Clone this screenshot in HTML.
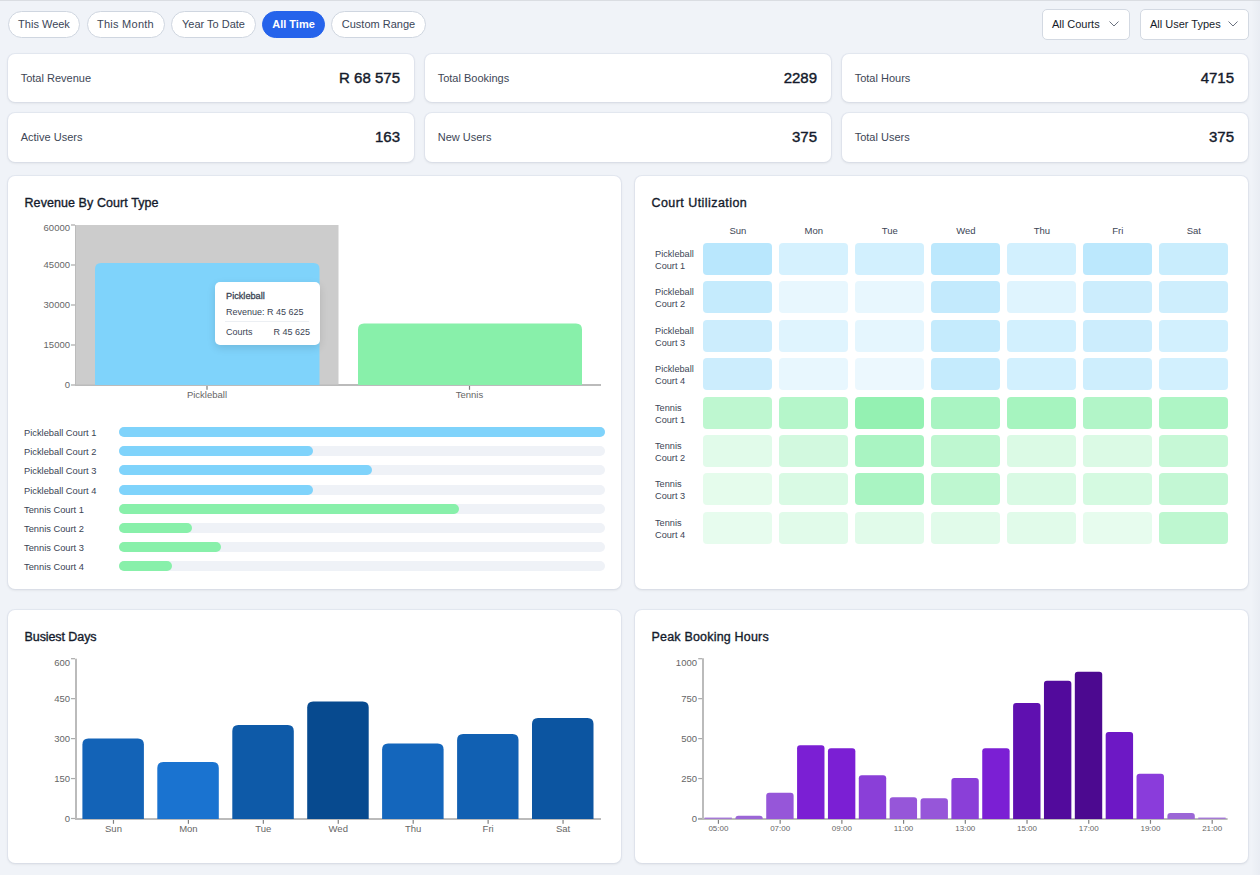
<!DOCTYPE html>
<html><head><meta charset="utf-8">
<style>
*{box-sizing:border-box;margin:0;padding:0}
html,body{width:1260px;height:875px;overflow:hidden;background:#f0f3f8;font-family:"Liberation Sans",sans-serif;position:relative}
.topline{position:absolute;left:0;top:0;width:1260px;height:1px;background:#dadde2}
.pill{position:absolute;top:11px;height:27px;border:1px solid #cfd6e0;border-radius:14px;background:#fff;color:#3b4658;font-size:11px;line-height:25px;text-align:center;white-space:nowrap}
.pill.on{background:#2563eb;border-color:#2563eb;color:#fff;font-weight:bold}
.dd{position:absolute;top:9px;height:31px;border:1px solid #d3d9e2;border-radius:5px;background:#fff;color:#161c2a;font-size:11px;line-height:28px;padding-left:9px;white-space:nowrap}
.dd svg{position:absolute;top:11px}
.card{position:absolute;background:#fff;border-radius:7px;box-shadow:0 0 0 1px rgba(212,220,232,0.45),0 1px 3px rgba(0,0,0,0.11)}
.lab{position:absolute;left:12.7px;font-size:11px;color:#3d4656;white-space:nowrap}
.val{position:absolute;right:14px;font-size:15px;font-weight:normal;-webkit-text-stroke:0.4px #131a2b;color:#131a2b;white-space:nowrap}
.title{position:absolute;font-size:12.5px;font-weight:normal;-webkit-text-stroke:0.35px #141b2c;color:#141b2c;white-space:nowrap}
svg text{font-family:"Liberation Sans",sans-serif}
</style></head>
<body>
<div class="topline"></div>
<div class="pill" style="left:8px;width:72px">This Week</div>
<div class="pill" style="left:86.5px;width:78px;letter-spacing:0.25px">This Month</div>
<div class="pill" style="left:171px;width:85px">Year To Date</div>
<div class="pill on" style="left:262px;width:63px">All Time</div>
<div class="pill" style="left:331px;width:95px">Custom Range</div>

<div class="dd" style="left:1042px;width:88px">All Courts<svg style="left:66px" width="10" height="6" viewBox="0 0 10 6"><path d="M0.5 0.5 L5 5 L9.5 0.5" fill="none" stroke="#6b7280" stroke-width="1"/></svg></div>
<div class="dd" style="left:1140px;width:109px">All User Types<svg style="left:87px" width="10" height="6" viewBox="0 0 10 6"><path d="M0.5 0.5 L5 5 L9.5 0.5" fill="none" stroke="#6b7280" stroke-width="1"/></svg></div>

<div class="card" style="left:8px;top:54px;width:406px;height:48px"><div class="lab" style="top:18px">Total Revenue</div><div class="val" style="top:14.5px">R 68 575</div></div>
<div class="card" style="left:425px;top:54px;width:406px;height:48px"><div class="lab" style="top:18px">Total Bookings</div><div class="val" style="top:14.5px">2289</div></div>
<div class="card" style="left:842px;top:54px;width:406px;height:48px"><div class="lab" style="top:18px">Total Hours</div><div class="val" style="top:14.5px">4715</div></div>
<div class="card" style="left:8px;top:113px;width:406px;height:49px"><div class="lab" style="top:18px">Active Users</div><div class="val" style="top:14.5px">163</div></div>
<div class="card" style="left:425px;top:113px;width:406px;height:49px"><div class="lab" style="top:18px">New Users</div><div class="val" style="top:14.5px">375</div></div>
<div class="card" style="left:842px;top:113px;width:406px;height:49px"><div class="lab" style="top:18px">Total Users</div><div class="val" style="top:14.5px">375</div></div>

<!-- chart cards -->
<div class="card" style="left:8px;top:176px;width:613px;height:413px"></div>
<div class="card" style="left:635px;top:176px;width:613px;height:413px"></div>
<div class="card" style="left:8px;top:610px;width:613px;height:253px"></div>
<div class="card" style="left:635px;top:610px;width:613px;height:253px"></div>

<div class="title" style="left:24.5px;top:195.9px;letter-spacing:0.075px">Revenue By Court Type</div>
<div class="title" style="left:651.5px;top:195.9px;letter-spacing:0.44px">Court Utilization</div>
<div class="title" style="left:24.5px;top:630.2px;letter-spacing:-0.08px">Busiest Days</div>
<div class="title" style="left:651.5px;top:630.2px;letter-spacing:0.19px">Peak Booking Hours</div>

<svg style="position:absolute;left:0;top:0" width="1260" height="875" viewBox="0 0 1260 875">
<rect x="75" y="225" width="2" height="161" fill="#bbb"/>
<rect x="75" y="384" width="526" height="2" fill="#bbb"/>
<rect x="76" y="225" width="262.5" height="159.5" fill="#cccccc"/>
<path d="M95,385 L95,269 Q95,263 101,263 L313.5,263 Q319.5,263 319.5,269 L319.5,385 Z" fill="#7fd3fb"/>
<path d="M358,385 L358,329.5 Q358,323.5 364,323.5 L576,323.5 Q582,323.5 582,329.5 L582,385 Z" fill="#88f0aa"/>
<rect x="71" y="224.4" width="4" height="1.2" fill="#aaa"/>
<text x="70" y="231.3" font-size="9.5" fill="#666" text-anchor="end">60000</text>
<rect x="71" y="264.4" width="4" height="1.2" fill="#aaa"/>
<text x="70" y="267.8" font-size="9.5" fill="#666" text-anchor="end">45000</text>
<rect x="71" y="304.4" width="4" height="1.2" fill="#aaa"/>
<text x="70" y="307.8" font-size="9.5" fill="#666" text-anchor="end">30000</text>
<rect x="71" y="344.4" width="4" height="1.2" fill="#aaa"/>
<text x="70" y="347.8" font-size="9.5" fill="#666" text-anchor="end">15000</text>
<rect x="71" y="384.4" width="4" height="1.2" fill="#aaa"/>
<text x="70" y="387.8" font-size="9.5" fill="#666" text-anchor="end">0</text>
<rect x="206.4" y="386" width="1.2" height="3.8" fill="#808080"/>
<text x="207" y="398" font-size="9.5" fill="#666" text-anchor="middle">Pickleball</text>
<rect x="468.9" y="386" width="1.2" height="3.8" fill="#808080"/>
<text x="469.5" y="398" font-size="9.5" fill="#666" text-anchor="middle">Tennis</text>
<rect x="75" y="658.7" width="2" height="161" fill="#bbb"/>
<rect x="75" y="818" width="526" height="2" fill="#bbb"/>
<rect x="71" y="658.10" width="4" height="1.2" fill="#aaa"/>
<text x="70" y="665.90" font-size="9.5" fill="#666" text-anchor="end">600</text>
<rect x="71" y="698.05" width="4" height="1.2" fill="#aaa"/>
<text x="70" y="701.95" font-size="9.5" fill="#666" text-anchor="end">450</text>
<rect x="71" y="738.00" width="4" height="1.2" fill="#aaa"/>
<text x="70" y="741.90" font-size="9.5" fill="#666" text-anchor="end">300</text>
<rect x="71" y="777.95" width="4" height="1.2" fill="#aaa"/>
<text x="70" y="781.85" font-size="9.5" fill="#666" text-anchor="end">150</text>
<rect x="71" y="817.90" width="4" height="1.2" fill="#aaa"/>
<text x="70" y="821.80" font-size="9.5" fill="#666" text-anchor="end">0</text>
<path d="M82.4,819 L82.4,744.5 Q82.4,738.5 88.4,738.5 L137.9,738.5 Q143.9,738.5 143.9,744.5 L143.9,819 Z" fill="#1363b7"/>
<rect x="112.87" y="820" width="1.2" height="3.8" fill="#808080"/>
<text x="113.47" y="832.2" font-size="9.5" fill="#666" text-anchor="middle">Sun</text>
<path d="M157.3,819 L157.3,768.1 Q157.3,762.1 163.3,762.1 L212.8,762.1 Q218.8,762.1 218.8,768.1 L218.8,819 Z" fill="#1a73d0"/>
<rect x="187.80" y="820" width="1.2" height="3.8" fill="#808080"/>
<text x="188.40" y="832.2" font-size="9.5" fill="#666" text-anchor="middle">Mon</text>
<path d="M232.3,819 L232.3,731.0 Q232.3,725.0 238.3,725.0 L287.8,725.0 Q293.8,725.0 293.8,731.0 L293.8,819 Z" fill="#0e5aa8"/>
<rect x="262.73" y="820" width="1.2" height="3.8" fill="#808080"/>
<text x="263.33" y="832.2" font-size="9.5" fill="#666" text-anchor="middle">Tue</text>
<path d="M307.2,819 L307.2,707.6 Q307.2,701.6 313.2,701.6 L362.7,701.6 Q368.7,701.6 368.7,707.6 L368.7,819 Z" fill="#074a8f"/>
<rect x="337.66" y="820" width="1.2" height="3.8" fill="#808080"/>
<text x="338.26" y="832.2" font-size="9.5" fill="#666" text-anchor="middle">Wed</text>
<path d="M382.1,819 L382.1,749.5 Q382.1,743.5 388.1,743.5 L437.6,743.5 Q443.6,743.5 443.6,749.5 L443.6,819 Z" fill="#1466bc"/>
<rect x="412.59" y="820" width="1.2" height="3.8" fill="#808080"/>
<text x="413.19" y="832.2" font-size="9.5" fill="#666" text-anchor="middle">Thu</text>
<path d="M457.1,819 L457.1,739.9 Q457.1,733.9 463.1,733.9 L512.5,733.9 Q518.5,733.9 518.5,739.9 L518.5,819 Z" fill="#1160b2"/>
<rect x="487.52" y="820" width="1.2" height="3.8" fill="#808080"/>
<text x="488.12" y="832.2" font-size="9.5" fill="#666" text-anchor="middle">Fri</text>
<path d="M532.0,819 L532.0,724.1 Q532.0,718.1 538.0,718.1 L587.5,718.1 Q593.5,718.1 593.5,724.1 L593.5,819 Z" fill="#0c55a1"/>
<rect x="562.45" y="820" width="1.2" height="3.8" fill="#808080"/>
<text x="563.05" y="832.2" font-size="9.5" fill="#666" text-anchor="middle">Sat</text>
<rect x="702" y="658.3" width="2" height="161.4" fill="#bbb"/>
<rect x="698" y="818" width="529.6" height="2" fill="#bbb"/>
<rect x="698.2" y="658.10" width="4" height="1.2" fill="#aaa"/>
<text x="697" y="665.90" font-size="9.5" fill="#666" text-anchor="end">1000</text>
<rect x="698.2" y="698.05" width="4" height="1.2" fill="#aaa"/>
<text x="697" y="701.95" font-size="9.5" fill="#666" text-anchor="end">750</text>
<rect x="698.2" y="738.00" width="4" height="1.2" fill="#aaa"/>
<text x="697" y="741.90" font-size="9.5" fill="#666" text-anchor="end">500</text>
<rect x="698.2" y="777.95" width="4" height="1.2" fill="#aaa"/>
<text x="697" y="781.85" font-size="9.5" fill="#666" text-anchor="end">250</text>
<rect x="698.2" y="817.90" width="4" height="1.2" fill="#aaa"/>
<text x="697" y="821.80" font-size="9.5" fill="#666" text-anchor="end">0</text>
<rect x="704.50" y="817.6" width="27.4" height="1.2" fill="#9e6ad8"/>
<rect x="717.83" y="820" width="1.2" height="3.8" fill="#808080"/>
<text x="718.43" y="831" font-size="8" fill="#666" text-anchor="middle">05:00</text>
<path d="M735.36,819 L735.36,818.82 Q735.36,815.82 738.36,815.82 L759.76,815.82 Q762.76,815.82 762.76,818.82 L762.76,819 Z" fill="#9b66d6"/>
<path d="M766.22,819 L766.22,795.81 Q766.22,792.81 769.22,792.81 L790.62,792.81 Q793.62,792.81 793.62,795.81 L793.62,819 Z" fill="#9656d9"/>
<rect x="779.55" y="820" width="1.2" height="3.8" fill="#808080"/>
<text x="780.15" y="831" font-size="8" fill="#666" text-anchor="middle">07:00</text>
<path d="M797.08,819 L797.08,748.35 Q797.08,745.35 800.08,745.35 L821.48,745.35 Q824.48,745.35 824.48,748.35 L824.48,819 Z" fill="#7b1fd4"/>
<path d="M827.94,819 L827.94,751.23 Q827.94,748.23 830.94,748.23 L852.34,748.23 Q855.34,748.23 855.34,751.23 L855.34,819 Z" fill="#7b1fd4"/>
<rect x="841.27" y="820" width="1.2" height="3.8" fill="#808080"/>
<text x="841.87" y="831" font-size="8" fill="#666" text-anchor="middle">09:00</text>
<path d="M858.8,819 L858.8,778.23 Q858.8,775.23 861.8,775.23 L883.2,775.23 Q886.2,775.23 886.2,778.23 L886.2,819 Z" fill="#8a3fd8"/>
<path d="M889.66,819 L889.66,800.29 Q889.66,797.29 892.66,797.29 L914.06,797.29 Q917.06,797.29 917.06,800.29 L917.06,819 Z" fill="#9656d9"/>
<rect x="902.99" y="820" width="1.2" height="3.8" fill="#808080"/>
<text x="903.59" y="831" font-size="8" fill="#666" text-anchor="middle">11:00</text>
<path d="M920.52,819 L920.52,801.25 Q920.52,798.25 923.52,798.25 L944.92,798.25 Q947.92,798.25 947.92,801.25 L947.92,819 Z" fill="#9656d9"/>
<path d="M951.38,819 L951.38,781.11 Q951.38,778.11 954.38,778.11 L975.78,778.11 Q978.78,778.11 978.78,781.11 L978.78,819 Z" fill="#8a3fd8"/>
<rect x="964.71" y="820" width="1.2" height="3.8" fill="#808080"/>
<text x="965.31" y="831" font-size="8" fill="#666" text-anchor="middle">13:00</text>
<path d="M982.24,819 L982.24,751.23 Q982.24,748.23 985.24,748.23 L1006.64,748.23 Q1009.64,748.23 1009.64,751.23 L1009.64,819 Z" fill="#7b1fd4"/>
<path d="M1013.1,819 L1013.1,706.0 Q1013.1,703.0 1016.1,703.0 L1037.5,703.0 Q1040.5,703.0 1040.5,706.0 L1040.5,819 Z" fill="#5f10b0"/>
<rect x="1026.43" y="820" width="1.2" height="3.8" fill="#808080"/>
<text x="1027.03" y="831" font-size="8" fill="#666" text-anchor="middle">15:00</text>
<path d="M1043.96,819 L1043.96,683.63 Q1043.96,680.63 1046.96,680.63 L1068.36,680.63 Q1071.36,680.63 1071.36,683.63 L1071.36,819 Z" fill="#520a9c"/>
<path d="M1074.82,819 L1074.82,674.84 Q1074.82,671.84 1077.82,671.84 L1099.22,671.84 Q1102.22,671.84 1102.22,674.84 L1102.22,819 Z" fill="#4c0990"/>
<rect x="1088.15" y="820" width="1.2" height="3.8" fill="#808080"/>
<text x="1088.75" y="831" font-size="8" fill="#666" text-anchor="middle">17:00</text>
<path d="M1105.68,819 L1105.68,735.09 Q1105.68,732.09 1108.68,732.09 L1130.08,732.09 Q1133.08,732.09 1133.08,735.09 L1133.08,819 Z" fill="#6d18c5"/>
<path d="M1136.54,819 L1136.54,776.64 Q1136.54,773.64 1139.54,773.64 L1160.94,773.64 Q1163.94,773.64 1163.94,776.64 L1163.94,819 Z" fill="#8a3cdb"/>
<rect x="1149.87" y="820" width="1.2" height="3.8" fill="#808080"/>
<text x="1150.47" y="831" font-size="8" fill="#666" text-anchor="middle">19:00</text>
<path d="M1167.4,819 L1167.4,815.95 Q1167.4,812.95 1170.4,812.95 L1191.8,812.95 Q1194.8,812.95 1194.8,815.95 L1194.8,819 Z" fill="#9b66d6"/>
<rect x="1198.26" y="817.6" width="27.4" height="1.2" fill="#9e6ad8"/>
<rect x="1211.59" y="820" width="1.2" height="3.8" fill="#808080"/>
<text x="1212.19" y="831" font-size="8" fill="#666" text-anchor="middle">21:00</text>
</svg>
<div style="position:absolute;left:215px;top:282.2px;width:105px;height:63px;background:#fff;border-radius:5px;box-shadow:0 3px 8px rgba(0,0,0,0.12)">
<div style="position:absolute;left:11px;top:9px;font-size:9.2px;font-weight:normal;-webkit-text-stroke:0.3px #3a4353;color:#3a4353;white-space:nowrap">Pickleball</div>
<div style="position:absolute;left:11px;top:25.2px;font-size:9px;color:#3a4353;white-space:nowrap">Revenue: R 45 625</div>
<div style="position:absolute;left:10px;top:39px;width:84px;height:1px;background:#eceff3"></div>
<div style="position:absolute;left:11px;top:45px;font-size:9px;color:#3a4353;white-space:nowrap">Courts</div>
<div style="position:absolute;right:10px;top:45px;font-size:9px;color:#3a4353;white-space:nowrap">R 45 625</div>
</div>
<div style="position:absolute;left:24px;top:427.00px;font-size:9.3px;line-height:12px;color:#3a4353;white-space:nowrap">Pickleball Court 1</div>
<div style="position:absolute;left:119px;top:427.00px;width:486px;height:10px;border-radius:5px;background:#eff2f7"></div>
<div style="position:absolute;left:119px;top:427.00px;width:486.0px;height:10px;border-radius:5px;background:#7fd3fb"></div>
<div style="position:absolute;left:24px;top:446.18px;font-size:9.3px;line-height:12px;color:#3a4353;white-space:nowrap">Pickleball Court 2</div>
<div style="position:absolute;left:119px;top:446.18px;width:486px;height:10px;border-radius:5px;background:#eff2f7"></div>
<div style="position:absolute;left:119px;top:446.18px;width:193.9px;height:10px;border-radius:5px;background:#7fd3fb"></div>
<div style="position:absolute;left:24px;top:465.36px;font-size:9.3px;line-height:12px;color:#3a4353;white-space:nowrap">Pickleball Court 3</div>
<div style="position:absolute;left:119px;top:465.36px;width:486px;height:10px;border-radius:5px;background:#eff2f7"></div>
<div style="position:absolute;left:119px;top:465.36px;width:252.7px;height:10px;border-radius:5px;background:#7fd3fb"></div>
<div style="position:absolute;left:24px;top:484.54px;font-size:9.3px;line-height:12px;color:#3a4353;white-space:nowrap">Pickleball Court 4</div>
<div style="position:absolute;left:119px;top:484.54px;width:486px;height:10px;border-radius:5px;background:#eff2f7"></div>
<div style="position:absolute;left:119px;top:484.54px;width:193.9px;height:10px;border-radius:5px;background:#7fd3fb"></div>
<div style="position:absolute;left:24px;top:503.72px;font-size:9.3px;line-height:12px;color:#3a4353;white-space:nowrap">Tennis Court 1</div>
<div style="position:absolute;left:119px;top:503.72px;width:486px;height:10px;border-radius:5px;background:#eff2f7"></div>
<div style="position:absolute;left:119px;top:503.72px;width:339.7px;height:10px;border-radius:5px;background:#88f0aa"></div>
<div style="position:absolute;left:24px;top:522.90px;font-size:9.3px;line-height:12px;color:#3a4353;white-space:nowrap">Tennis Court 2</div>
<div style="position:absolute;left:119px;top:522.90px;width:486px;height:10px;border-radius:5px;background:#eff2f7"></div>
<div style="position:absolute;left:119px;top:522.90px;width:72.9px;height:10px;border-radius:5px;background:#88f0aa"></div>
<div style="position:absolute;left:24px;top:542.08px;font-size:9.3px;line-height:12px;color:#3a4353;white-space:nowrap">Tennis Court 3</div>
<div style="position:absolute;left:119px;top:542.08px;width:486px;height:10px;border-radius:5px;background:#eff2f7"></div>
<div style="position:absolute;left:119px;top:542.08px;width:102.1px;height:10px;border-radius:5px;background:#88f0aa"></div>
<div style="position:absolute;left:24px;top:561.26px;font-size:9.3px;line-height:12px;color:#3a4353;white-space:nowrap">Tennis Court 4</div>
<div style="position:absolute;left:119px;top:561.26px;width:486px;height:10px;border-radius:5px;background:#eff2f7"></div>
<div style="position:absolute;left:119px;top:561.26px;width:52.5px;height:10px;border-radius:5px;background:#88f0aa"></div>
<div style="position:absolute;left:707.85px;width:60px;top:224.5px;text-align:center;font-size:9.5px;line-height:12px;color:#3d4656">Sun</div>
<div style="position:absolute;left:783.85px;width:60px;top:224.5px;text-align:center;font-size:9.5px;line-height:12px;color:#3d4656">Mon</div>
<div style="position:absolute;left:859.85px;width:60px;top:224.5px;text-align:center;font-size:9.5px;line-height:12px;color:#3d4656">Tue</div>
<div style="position:absolute;left:935.85px;width:60px;top:224.5px;text-align:center;font-size:9.5px;line-height:12px;color:#3d4656">Wed</div>
<div style="position:absolute;left:1011.85px;width:60px;top:224.5px;text-align:center;font-size:9.5px;line-height:12px;color:#3d4656">Thu</div>
<div style="position:absolute;left:1087.85px;width:60px;top:224.5px;text-align:center;font-size:9.5px;line-height:12px;color:#3d4656">Fri</div>
<div style="position:absolute;left:1163.85px;width:60px;top:224.5px;text-align:center;font-size:9.5px;line-height:12px;color:#3d4656">Sat</div>
<div style="position:absolute;left:655px;top:249.10px;font-size:9.2px;line-height:11.7px;color:#3d4656;white-space:nowrap">Pickleball<br>Court 1</div>
<div style="position:absolute;left:703px;top:243.00px;width:69.3px;height:31.8px;border-radius:4px;background:rgba(127,211,251,0.55)"></div>
<div style="position:absolute;left:779px;top:243.00px;width:69.3px;height:31.8px;border-radius:4px;background:rgba(127,211,251,0.33)"></div>
<div style="position:absolute;left:855px;top:243.00px;width:69.3px;height:31.8px;border-radius:4px;background:rgba(127,211,251,0.35)"></div>
<div style="position:absolute;left:931px;top:243.00px;width:69.3px;height:31.8px;border-radius:4px;background:rgba(127,211,251,0.52)"></div>
<div style="position:absolute;left:1007px;top:243.00px;width:69.3px;height:31.8px;border-radius:4px;background:rgba(127,211,251,0.35)"></div>
<div style="position:absolute;left:1083px;top:243.00px;width:69.3px;height:31.8px;border-radius:4px;background:rgba(127,211,251,0.52)"></div>
<div style="position:absolute;left:1159px;top:243.00px;width:69.3px;height:31.8px;border-radius:4px;background:rgba(127,211,251,0.42)"></div>
<div style="position:absolute;left:655px;top:287.10px;font-size:9.2px;line-height:11.7px;color:#3d4656;white-space:nowrap">Pickleball<br>Court 2</div>
<div style="position:absolute;left:703px;top:281.00px;width:69.3px;height:31.8px;border-radius:4px;background:rgba(127,211,251,0.45)"></div>
<div style="position:absolute;left:779px;top:281.00px;width:69.3px;height:31.8px;border-radius:4px;background:rgba(127,211,251,0.18)"></div>
<div style="position:absolute;left:855px;top:281.00px;width:69.3px;height:31.8px;border-radius:4px;background:rgba(127,211,251,0.18)"></div>
<div style="position:absolute;left:931px;top:281.00px;width:69.3px;height:31.8px;border-radius:4px;background:rgba(127,211,251,0.47)"></div>
<div style="position:absolute;left:1007px;top:281.00px;width:69.3px;height:31.8px;border-radius:4px;background:rgba(127,211,251,0.25)"></div>
<div style="position:absolute;left:1083px;top:281.00px;width:69.3px;height:31.8px;border-radius:4px;background:rgba(127,211,251,0.4)"></div>
<div style="position:absolute;left:1159px;top:281.00px;width:69.3px;height:31.8px;border-radius:4px;background:rgba(127,211,251,0.38)"></div>
<div style="position:absolute;left:655px;top:326.10px;font-size:9.2px;line-height:11.7px;color:#3d4656;white-space:nowrap">Pickleball<br>Court 3</div>
<div style="position:absolute;left:703px;top:320.00px;width:69.3px;height:31.8px;border-radius:4px;background:rgba(127,211,251,0.4)"></div>
<div style="position:absolute;left:779px;top:320.00px;width:69.3px;height:31.8px;border-radius:4px;background:rgba(127,211,251,0.25)"></div>
<div style="position:absolute;left:855px;top:320.00px;width:69.3px;height:31.8px;border-radius:4px;background:rgba(127,211,251,0.2)"></div>
<div style="position:absolute;left:931px;top:320.00px;width:69.3px;height:31.8px;border-radius:4px;background:rgba(127,211,251,0.45)"></div>
<div style="position:absolute;left:1007px;top:320.00px;width:69.3px;height:31.8px;border-radius:4px;background:rgba(127,211,251,0.35)"></div>
<div style="position:absolute;left:1083px;top:320.00px;width:69.3px;height:31.8px;border-radius:4px;background:rgba(127,211,251,0.4)"></div>
<div style="position:absolute;left:1159px;top:320.00px;width:69.3px;height:31.8px;border-radius:4px;background:rgba(127,211,251,0.35)"></div>
<div style="position:absolute;left:655px;top:364.10px;font-size:9.2px;line-height:11.7px;color:#3d4656;white-space:nowrap">Pickleball<br>Court 4</div>
<div style="position:absolute;left:703px;top:358.00px;width:69.3px;height:31.8px;border-radius:4px;background:rgba(127,211,251,0.4)"></div>
<div style="position:absolute;left:779px;top:358.00px;width:69.3px;height:31.8px;border-radius:4px;background:rgba(127,211,251,0.18)"></div>
<div style="position:absolute;left:855px;top:358.00px;width:69.3px;height:31.8px;border-radius:4px;background:rgba(127,211,251,0.15)"></div>
<div style="position:absolute;left:931px;top:358.00px;width:69.3px;height:31.8px;border-radius:4px;background:rgba(127,211,251,0.45)"></div>
<div style="position:absolute;left:1007px;top:358.00px;width:69.3px;height:31.8px;border-radius:4px;background:rgba(127,211,251,0.35)"></div>
<div style="position:absolute;left:1083px;top:358.00px;width:69.3px;height:31.8px;border-radius:4px;background:rgba(127,211,251,0.38)"></div>
<div style="position:absolute;left:1159px;top:358.00px;width:69.3px;height:31.8px;border-radius:4px;background:rgba(127,211,251,0.35)"></div>
<div style="position:absolute;left:655px;top:403.10px;font-size:9.2px;line-height:11.7px;color:#3d4656;white-space:nowrap">Tennis<br>Court 1</div>
<div style="position:absolute;left:703px;top:397.00px;width:69.3px;height:31.8px;border-radius:4px;background:rgba(136,240,170,0.55)"></div>
<div style="position:absolute;left:779px;top:397.00px;width:69.3px;height:31.8px;border-radius:4px;background:rgba(136,240,170,0.62)"></div>
<div style="position:absolute;left:855px;top:397.00px;width:69.3px;height:31.8px;border-radius:4px;background:rgba(136,240,170,0.9)"></div>
<div style="position:absolute;left:931px;top:397.00px;width:69.3px;height:31.8px;border-radius:4px;background:rgba(136,240,170,0.72)"></div>
<div style="position:absolute;left:1007px;top:397.00px;width:69.3px;height:31.8px;border-radius:4px;background:rgba(136,240,170,0.75)"></div>
<div style="position:absolute;left:1083px;top:397.00px;width:69.3px;height:31.8px;border-radius:4px;background:rgba(136,240,170,0.65)"></div>
<div style="position:absolute;left:1159px;top:397.00px;width:69.3px;height:31.8px;border-radius:4px;background:rgba(136,240,170,0.68)"></div>
<div style="position:absolute;left:655px;top:441.10px;font-size:9.2px;line-height:11.7px;color:#3d4656;white-space:nowrap">Tennis<br>Court 2</div>
<div style="position:absolute;left:703px;top:435.00px;width:69.3px;height:31.8px;border-radius:4px;background:rgba(136,240,170,0.25)"></div>
<div style="position:absolute;left:779px;top:435.00px;width:69.3px;height:31.8px;border-radius:4px;background:rgba(136,240,170,0.38)"></div>
<div style="position:absolute;left:855px;top:435.00px;width:69.3px;height:31.8px;border-radius:4px;background:rgba(136,240,170,0.72)"></div>
<div style="position:absolute;left:931px;top:435.00px;width:69.3px;height:31.8px;border-radius:4px;background:rgba(136,240,170,0.55)"></div>
<div style="position:absolute;left:1007px;top:435.00px;width:69.3px;height:31.8px;border-radius:4px;background:rgba(136,240,170,0.3)"></div>
<div style="position:absolute;left:1083px;top:435.00px;width:69.3px;height:31.8px;border-radius:4px;background:rgba(136,240,170,0.3)"></div>
<div style="position:absolute;left:1159px;top:435.00px;width:69.3px;height:31.8px;border-radius:4px;background:rgba(136,240,170,0.48)"></div>
<div style="position:absolute;left:655px;top:479.10px;font-size:9.2px;line-height:11.7px;color:#3d4656;white-space:nowrap">Tennis<br>Court 3</div>
<div style="position:absolute;left:703px;top:473.00px;width:69.3px;height:31.8px;border-radius:4px;background:rgba(136,240,170,0.22)"></div>
<div style="position:absolute;left:779px;top:473.00px;width:69.3px;height:31.8px;border-radius:4px;background:rgba(136,240,170,0.32)"></div>
<div style="position:absolute;left:855px;top:473.00px;width:69.3px;height:31.8px;border-radius:4px;background:rgba(136,240,170,0.72)"></div>
<div style="position:absolute;left:931px;top:473.00px;width:69.3px;height:31.8px;border-radius:4px;background:rgba(136,240,170,0.55)"></div>
<div style="position:absolute;left:1007px;top:473.00px;width:69.3px;height:31.8px;border-radius:4px;background:rgba(136,240,170,0.32)"></div>
<div style="position:absolute;left:1083px;top:473.00px;width:69.3px;height:31.8px;border-radius:4px;background:rgba(136,240,170,0.35)"></div>
<div style="position:absolute;left:1159px;top:473.00px;width:69.3px;height:31.8px;border-radius:4px;background:rgba(136,240,170,0.5)"></div>
<div style="position:absolute;left:655px;top:518.10px;font-size:9.2px;line-height:11.7px;color:#3d4656;white-space:nowrap">Tennis<br>Court 4</div>
<div style="position:absolute;left:703px;top:512.00px;width:69.3px;height:31.8px;border-radius:4px;background:rgba(136,240,170,0.2)"></div>
<div style="position:absolute;left:779px;top:512.00px;width:69.3px;height:31.8px;border-radius:4px;background:rgba(136,240,170,0.25)"></div>
<div style="position:absolute;left:855px;top:512.00px;width:69.3px;height:31.8px;border-radius:4px;background:rgba(136,240,170,0.25)"></div>
<div style="position:absolute;left:931px;top:512.00px;width:69.3px;height:31.8px;border-radius:4px;background:rgba(136,240,170,0.25)"></div>
<div style="position:absolute;left:1007px;top:512.00px;width:69.3px;height:31.8px;border-radius:4px;background:rgba(136,240,170,0.25)"></div>
<div style="position:absolute;left:1083px;top:512.00px;width:69.3px;height:31.8px;border-radius:4px;background:rgba(136,240,170,0.2)"></div>
<div style="position:absolute;left:1159px;top:512.00px;width:69.3px;height:31.8px;border-radius:4px;background:rgba(136,240,170,0.55)"></div>
<div id="edgeband" style="position:absolute;left:1251px;top:1px;width:9px;height:874px;background:linear-gradient(to right,rgba(40,60,100,0),rgba(40,60,100,0.035))"></div>
</body></html>
